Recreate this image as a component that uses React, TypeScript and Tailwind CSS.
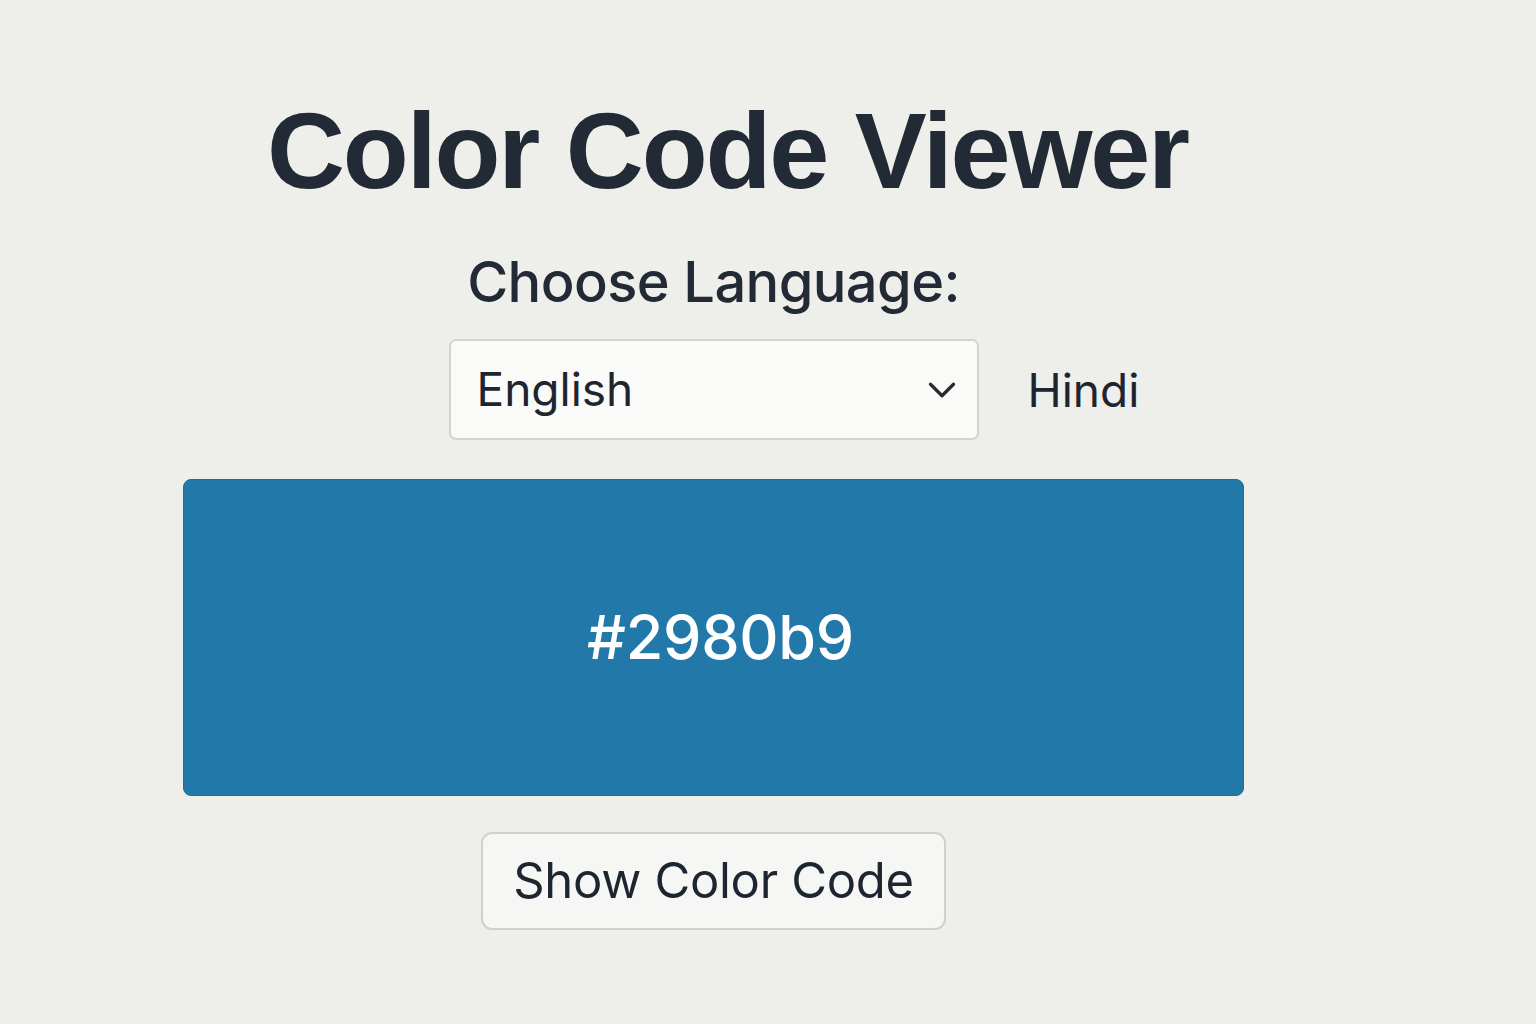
import React, { useState } from 'react';
import { ChevronDown } from 'lucide-react';

const colorCode = '#2980b9';

const App: React.FC = () => {
  const [lang, setLang] = useState('English');
  const [shown, setShown] = useState(true);

  return (
    <div className="min-h-screen w-full bg-[#eeeeea] font-['Inter',sans-serif] text-[#212a35]">
      <div className="ml-[183px] flex w-[1061px] flex-col items-center pt-[97px]">
        {/* Title */}
        <h1 className="font-['Liberation_Sans',Arial,sans-serif] text-[108px] font-bold leading-none tracking-[-2.2px] pl-[28px]">
          Color Code Viewer
        </h1>

        <p className="mt-[49px] text-[56px] font-medium leading-none tracking-[-0.6px]">Choose Language:</p>

        {/* Language row */}
        <div className="mt-[29px] grid w-full grid-cols-[1fr_auto_1fr] items-center">
          <div />
          <div className="relative">
            <select
              value={lang}
              onChange={(e) => setLang(e.target.value)}
              className="h-[101px] w-[530px] appearance-none rounded-[7px] border-2 border-[#d3d3d0] bg-[#fafaf8] pl-[26px] text-[46px] text-[#1d2530] outline-none"
            >
              <option>English</option>
              <option>Hindi</option>
            </select>
            <ChevronDown
              className="pointer-events-none absolute right-[14px] top-1/2 h-[46px] w-[46px] -translate-y-1/2 text-[#2a2a2a]"
              strokeWidth={1.7}
            />
          </div>
          <span className="ml-[49px] text-[46px] leading-none text-[#1d2530]">Hindi</span>
        </div>

        {/* Color swatch */}
        <div className="mt-[39px] flex h-[317px] w-full items-center justify-center rounded-[8px] border border-[#1d6e9b] bg-[#2279a9]">
          {shown && (
            <span className="pl-[14px] text-[61px] font-medium tracking-[-0.3px] text-white">{colorCode}</span>
          )}
        </div>

        <button
          onClick={() => setShown(!shown)}
          className="mt-[36px] h-[98px] w-[465px] rounded-[11px] border-2 border-[#d0d0cd] bg-[#f6f6f4] text-[49px] tracking-[-0.3px] text-[#1d2530]"
        >
          Show Color Code
        </button>
      </div>
    </div>
  );
};

export default App;
